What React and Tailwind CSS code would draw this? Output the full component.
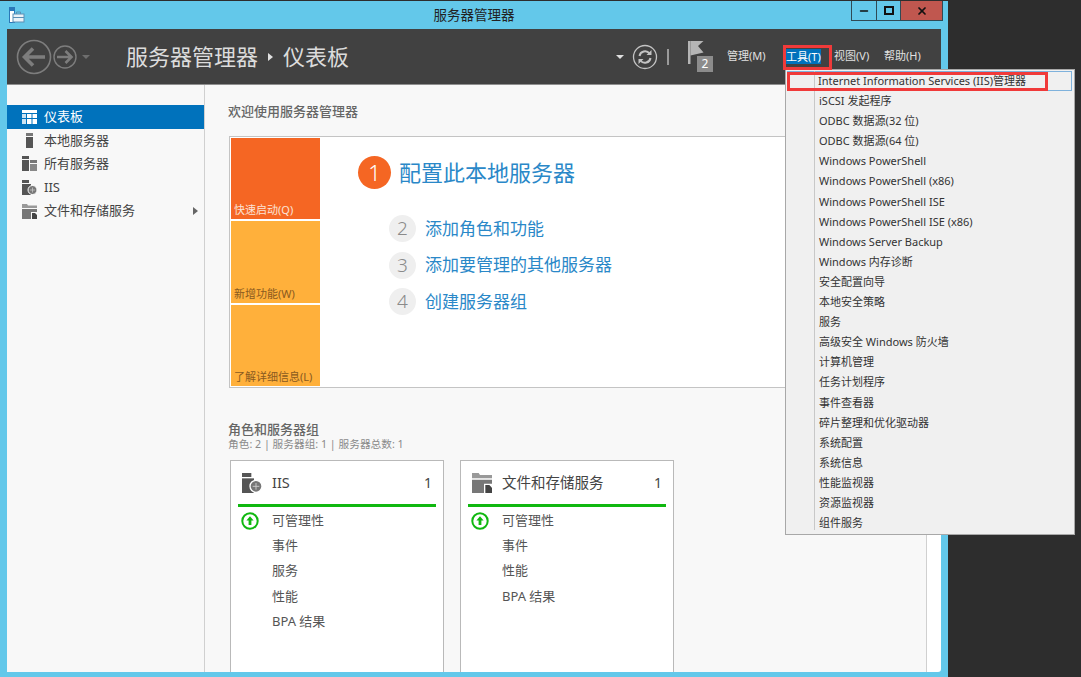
import React from 'react';
import { Minus, X } from 'lucide-react';

const FONT = 'font-["Noto_Sans","Noto_Sans_CJK_SC",sans-serif]';

const DashboardIcon = () => (
    <svg width="15" height="14" viewBox="0 0 15 14" fill="#fff">
        <rect x="0" y="0" width="15" height="3" />
        <rect x="0" y="4" width="4" height="4" opacity="0.8" /><rect x="5" y="4" width="4.5" height="4" /><rect x="10.5" y="4" width="4.5" height="4" />
        <rect x="0" y="9" width="4" height="5" opacity="0.8" /><rect x="5" y="9" width="4.5" height="5" /><rect x="10.5" y="9" width="4.5" height="5" />
    </svg>
);

const ServerIcon = () => (
    <svg width="15" height="15" viewBox="0 0 15 15" fill="#555">
        <rect x="4" y="0" width="7" height="3" fill="#777" />
        <rect x="4" y="4" width="7" height="11" />
    </svg>
);

const AllServersIcon = () => (
    <svg width="15" height="15" viewBox="0 0 15 15" fill="#555">
        <rect x="0" y="0" width="7" height="3" />
        <rect x="0" y="4" width="7" height="11" />
        <rect x="8" y="4" width="7" height="3" fill="#777" />
        <rect x="8" y="8" width="7" height="7" fill="#888" />
    </svg>
);

const IisIcon = ({ size = 15 }) => (
    <svg width={size} height={size} viewBox="0 0 15 15" fill="#555">
        <rect x="0" y="0" width="7" height="3" />
        <rect x="0" y="4" width="9" height="11" />
        <circle cx="10.5" cy="10" r="4.5" fill="#777" stroke="#fff" strokeWidth="1" />
        <path d="M8 10h5M10.5 7.5v5" stroke="#ccc" strokeWidth="0.7" />
    </svg>
);

const FilesIcon = ({ size = 15 }) => (
    <svg width={size} height={size} viewBox="0 0 15 15" fill="#777">
        <path d="M0 0h5l1 1.5h9V4H0z" fill="#999" />
        <path d="M0 5h15v3H9v7H0z" />
        <path d="M10 9h3l2 2v4h-5z" fill="#444" />
    </svg>
);

const UpIcon = () => (
    <svg width="18" height="18" viewBox="0 0 18 18">
        <circle cx="9" cy="9" r="7.7" fill="#fff" stroke="#10b810" strokeWidth="2" />
        <path d="M9 4.2 5.4 8.4h2.2v4.6h2.8V8.4h2.2z" fill="#10b810" />
    </svg>
);

const NavArrows = () => (
    <svg width="84" height="38" viewBox="0 0 84 38" fill="none" stroke="#7d7d7d">
        <circle cx="18" cy="19" r="16.5" strokeWidth="1.6" />
        <path d="M29 19H9M17 10.5 8.5 19l8.5 8.5" strokeWidth="3.6" />
        <circle cx="49" cy="19" r="11" strokeWidth="1.4" />
        <path d="M41 19h14M49.5 13l6 6-6 6" strokeWidth="2.6" />
        <path d="M66 17h8l-4 4z" fill="#6e6e6e" stroke="none" />
    </svg>
);

const RefreshIcon = () => (
    <svg width="26" height="26" viewBox="0 0 26 26" fill="none" stroke="#c4c4c4">
        <circle cx="13" cy="13" r="11.5" strokeWidth="1.3" />
        <path d="M7.5 12a5.6 5.6 0 0 1 10-2.5M18.5 14a5.6 5.6 0 0 1-10 2.5" strokeWidth="2" />
        <path d="M19.5 6v5h-5zM6.5 20v-5h5z" fill="#c4c4c4" stroke="none" />
    </svg>
);

const FlagIcon = () => (
    <div className="relative w-[25px] h-[31px]">
        <svg width="16" height="23" viewBox="0 0 16 23">
            <rect x="0" y="0" width="2.5" height="23" fill="#b5b5b5" />
            <path d="M2.5 0H15.5L10 5l5.5 6.5-13 3z" fill="#b5b5b5" />
        </svg>
        <div className="absolute right-0 bottom-0 w-[16px] h-[16px] bg-[#8c8c8c] text-white text-[12px] leading-[16px] text-center">2</div>
    </div>
);

const TitleIcon = () => (
    <svg width="16" height="16" viewBox="0 0 16 16" fill="none">
        <rect x="0.5" y="0.5" width="5" height="15" fill="#fff" stroke="#2a78b8" />
        <rect x="1" y="1" width="4" height="3" fill="#2a78b8" />
        <rect x="4" y="7" width="11" height="8" fill="#eaf2f8" stroke="#5a8fb5" />
        <path d="M7.5 7V5h4v2M4 10.5h11" stroke="#5a8fb5" />
    </svg>
);

const Tile = ({ label, className }) => (
    <div className={`h-[82px] flex items-end pl-[3px] pb-[2px] text-[11px] leading-[14px] ${className}`}>{label}</div>
);

const Step = ({ n, label }) => (
    <div className="flex items-center h-[27px] gap-[9px]">
        <div className="w-[27px] h-[27px] rounded-full bg-[#efefef] text-[#8a8a8a] text-[19px] font-light leading-[27px] text-center">{n}</div>
        <span className="text-[17px] leading-[24px] text-[#2a88c8]">{label}</span>
    </div>
);

const RoleCard = ({ icon, name, rows }) => (
    <div className="w-[214px] h-[213px] shrink-0 border border-[#b9b9b9] bg-white">
        <div className="h-[43px] flex items-center pl-[11px] pr-[11px]">
            <div className="w-[30px] shrink-0 mt-px">{icon}</div>
            <span className="flex-1 text-[14.5px] text-[#444]">{name}</span>
            <span className="text-[14px] text-[#444]">1</span>
        </div>
        <div className="mx-[7px] h-[3px] bg-[#10b810]" />
        <div className="pt-px">
            {rows.map((row, i) => (
                <div key={row} className="h-[25.3px] flex items-center pl-[10px]">
                    <div className="w-[31px] shrink-0 flex">{i === 0 && <UpIcon />}</div>
                    <span className="text-[13px] text-[#555]">{row}</span>
                </div>
            ))}
        </div>
    </div>
);

const SIDE_ITEMS = [
    { label: '仪表板', icon: <DashboardIcon />, active: true },
    { label: '本地服务器', icon: <ServerIcon /> },
    { label: '所有服务器', icon: <AllServersIcon /> },
    { label: 'IIS', icon: <IisIcon /> },
    { label: '文件和存储服务', icon: <FilesIcon />, arrow: true },
];

const MENU_ITEMS = [
    'Internet Information Services (IIS)管理器',
    'iSCSI 发起程序',
    'ODBC 数据源(32 位)',
    'ODBC 数据源(64 位)',
    'Windows PowerShell',
    'Windows PowerShell (x86)',
    'Windows PowerShell ISE',
    'Windows PowerShell ISE (x86)',
    'Windows Server Backup',
    'Windows 内存诊断',
    '安全配置向导',
    '本地安全策略',
    '服务',
    '高级安全 Windows 防火墙',
    '计算机管理',
    '任务计划程序',
    '事件查看器',
    '碎片整理和优化驱动器',
    '系统配置',
    '系统信息',
    '性能监视器',
    '资源监视器',
    '组件服务',
];

export default function App() {
    return (
        <div className={`relative w-[1081px] h-[677px] overflow-hidden bg-[#2d2d2d] pt-px ${FONT}`}>
            <div className="w-[948px] h-[676px] bg-[#63c8ea] flex flex-col">
                {/* Title bar */}
                <div className="h-[28px] shrink-0 grid grid-cols-[1fr_auto_1fr]">
                    <div className="pl-[9px] pt-[6px]"><TitleIcon /></div>
                    <div className="text-[13.5px] leading-[28px] text-[#222]">服务器管理器</div>
                    <div className="flex justify-end pr-[5px]">
                        <div className="flex h-[20px] border border-t-0 border-[#2f4a55]">
                            <div className="w-[25px] flex items-center justify-center border-r border-[#2f4a55]">
                                <Minus size={12} strokeWidth={3} color="#111" />
                            </div>
                            <div className="w-[24px] flex items-center justify-center border-r border-[#2f4a55]">
                                <div className="w-[10px] h-[9px] border-2 border-[#111]" />
                            </div>
                            <div className="w-[41px] flex items-center justify-center bg-[#c0574f]">
                                <X size={12} strokeWidth={3.5} color="#111" />
                            </div>
                        </div>
                    </div>
                </div>

                {/* Header */}
                <div className="mx-[7px] h-[56px] shrink-0 bg-[#414141] border-b border-[#8f8f8f] flex items-center pl-[9px] pr-[19px]">
                    <NavArrows />
                    <div className="ml-[26px] flex items-center text-[22px] text-[#dcdcdc]">
                        <span>服务器管理器</span>
                        <span className="mx-[10px] w-0 h-0 border-y-[4px] border-y-transparent border-l-[5px] border-l-[#e0e0e0]" />
                        <span>仪表板</span>
                    </div>
                    <div className="flex-1" />
                    <div className="w-0 h-0 border-x-[4px] border-x-transparent border-t-[4px] border-t-[#e0e0e0] mr-[8px]" />
                    <RefreshIcon />
                    <div className="w-[2px] h-[16px] bg-[#9a9a9a] ml-[9px] mr-[19px]" />
                    <FlagIcon />
                    <div className="ml-[14px] flex items-center text-[11px] text-[#e0e0e0] gap-[13px]">
                        <span className="w-[40px] whitespace-nowrap">管理(M)</span>
                        <span className="ml-[6px] w-[35px] h-[15px] leading-[15px] bg-[#0072bc] text-white whitespace-nowrap">工具(T)</span>
                        <span className="w-[37px] whitespace-nowrap">视图(V)</span>
                        <span className="w-[38px] whitespace-nowrap">帮助(H)</span>
                    </div>
                </div>

                {/* Body */}
                <div className="mx-[7px] h-[587px] shrink-0 flex bg-white overflow-hidden rounded-br-[3px]">
                    {/* Sidebar */}
                    <div className="w-[198px] shrink-0 bg-[#f8f8f8] border-r border-[#d0d0d0] pt-[20px]">
                        {SIDE_ITEMS.map((item) => (
                            <div
                                key={item.label}
                                className={`h-[23.6px] flex items-center pl-[15px] pr-[6px] text-[13px] ${item.active ? 'bg-[#0072bc] text-white' : 'text-[#444]'}`}
                            >
                                <div className="w-[22px] shrink-0 flex">{item.icon}</div>
                                <span className="flex-1">{item.label}</span>
                                {item.arrow && <div className="w-0 h-0 border-y-[4px] border-y-transparent border-l-[5px] border-l-[#666]" />}
                            </div>
                        ))}
                    </div>

                    {/* Main */}
                    <div className="w-[722px] shrink-0 bg-[#f8f8f8] border-r border-[#d0d0d0] pl-[23px]">
                        <div className="h-[18px] mt-[17px] text-[13px] leading-[18px] font-medium text-[#666]">欢迎使用服务器管理器</div>
                        <div className="mt-[16px] ml-px w-[683px] h-[252px] border border-[#c4c4c4] bg-white flex p-px">
                            <div className="w-[89px] mr-px shrink-0 flex flex-col gap-[2px]">
                                <Tile label="快速启动(Q)" className="bg-[#f56623] text-[#fbe3d6]" />
                                <Tile label="新增功能(W)" className="bg-[#ffb03b] text-[#8a5a20]" />
                                <Tile label="了解详细信息(L)" className="bg-[#ffb03b] text-[#8a5a20]" />
                            </div>
                            <div className="pl-[37px] pt-[18px]">
                                <div className="flex items-center h-[32px] gap-[8px]">
                                    <div className="w-[33px] h-[33px] rounded-full bg-[#f56623] text-white text-[22px] font-light leading-[33px] text-center">1</div>
                                    <span className="text-[22px] leading-[32px] text-[#2a88c8]">配置此本地服务器</span>
                                </div>
                                <div className="mt-[27px] ml-[31px] flex flex-col gap-[9.5px]">
                                    <Step n="2" label="添加角色和功能" />
                                    <Step n="3" label="添加要管理的其他服务器" />
                                    <Step n="4" label="创建服务器组" />
                                </div>
                            </div>
                        </div>

                        <div className="mt-[33px] text-[13px] leading-[16px] font-medium text-[#666]">角色和服务器组</div>
                        <div className="text-[10.7px] leading-[14px] text-[#8a8a8a]">角色: 2 | 服务器组: 1 | 服务器总数: 1</div>
                        <div className="mt-[9px] ml-[2px] flex gap-[16px]">
                            <RoleCard icon={<IisIcon size={20} />} name="IIS" rows={['可管理性', '事件', '服务', '性能', 'BPA 结果']} />
                            <RoleCard icon={<FilesIcon size={20} />} name="文件和存储服务" rows={['可管理性', '事件', '性能', 'BPA 结果']} />
                        </div>
                    </div>
                </div>
            </div>

            {/* Tools menu */}
            <div className="absolute left-[785px] top-[69px] w-[290px] h-[466px] bg-[#f0f0f0] border border-[#a8a8a8] p-px">
                <div className="absolute left-[28px] top-[1px] bottom-[4px] w-px bg-[#c8c8c8]" />
                {MENU_ITEMS.map((item, i) => (
                    <div
                        key={item}
                        className={`h-[20.1px] text-[11px] text-[#333] whitespace-nowrap ${i === 0 ? 'border border-[#7fb2dc] mr-px leading-[18px] pl-[30px]' : 'pl-[32px] leading-[20px]'}`}
                    >
                        {item}
                    </div>
                ))}
                <div className="absolute left-[1px] top-[2px] w-[261px] h-[19px] border-[3px] border-[#f03a3a]" />
            </div>
            <div className="absolute left-[783px] top-[45px] w-[49px] h-[25px] border-[3px] border-[#f03a3a]" />
        </div>
    );
}
